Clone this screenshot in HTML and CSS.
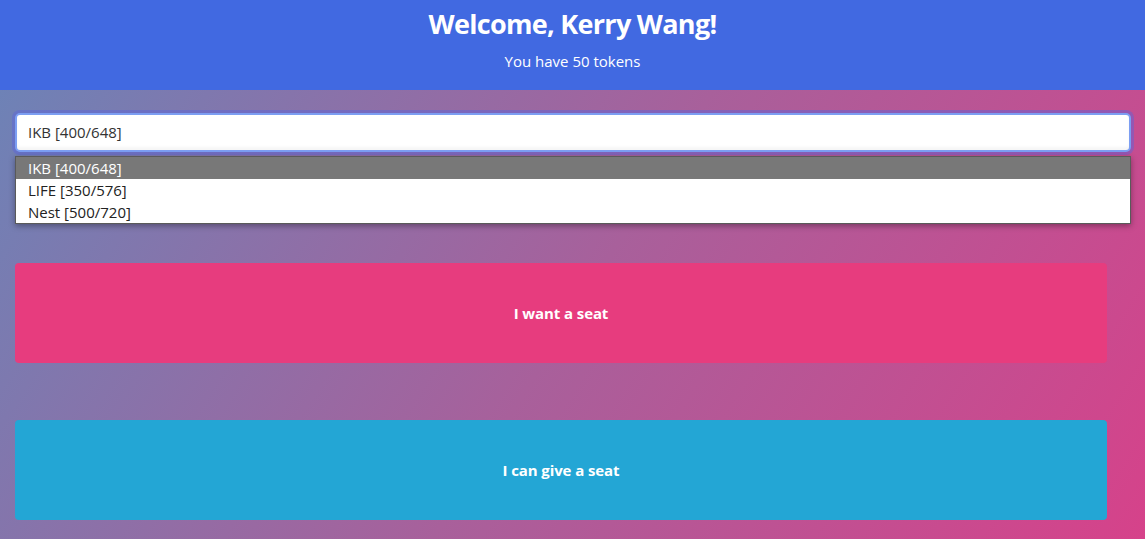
FILE: index.html
```html
<!DOCTYPE html>
<html lang="en">
<head>
<meta charset="utf-8">
<title>Seats</title>
<link rel="stylesheet" href="styles.css">
</head>
<body>
<header class="header">
  <h1 class="title">Welcome, Kerry Wang!</h1>
  <p class="subtitle">You have 50 tokens</p>
</header>
<main class="main">
  <div class="picker">
    <div class="select">IKB [400/648]</div>
    <ul class="options">
      <li class="option active">IKB [400/648]</li>
      <li class="option">LIFE [350/576]</li>
      <li class="option">Nest [500/720]</li>
    </ul>
  </div>
  <div class="actions">
    <button class="action want">I want a seat</button>
    <button class="action give">I can give a seat</button>
  </div>
</main>
</body>
</html>
```
FILE: styles.css
```css
* { box-sizing: border-box; }
html, body { margin: 0; padding: 0; height: 100%; }
body {
  font-family: "Open Sans", "Noto Sans", sans-serif;
  display: flex;
  flex-direction: column;
  background: #8a6aa8;
}
.header {
  background: #4169e1;
  height: 90px;
  color: #fff;
  text-align: center;
  padding-top: 6px;
}
.title {
  margin: 0;
  font-size: 27px;
  font-weight: 700;
  line-height: 36px;
  letter-spacing: -0.7px;
}
.subtitle {
  margin: 9px 0 0;
  font-size: 15px;
  line-height: 20px;
  letter-spacing: 0;
}
.main {
  flex: 1;
  background: linear-gradient(122deg, #6e82b6 0%, #a8609b 50%, #d6428a 100%);
  padding: 23px 14px 0 15px;
}
.picker { position: relative; }
.select {
  height: 39px;
  background: #fff;
  border: 2px solid #7c9ef2;
  border-radius: 5px;
  box-shadow: 0 0 0 3px rgba(90, 100, 220, 0.45), inset 0 -3px 3px rgba(0,0,0,0.04);
  padding-left: 11px;
  font-size: 15px;
  line-height: 35px;
  color: #333;
}
.options {
  position: absolute;
  left: 0;
  right: 0;
  top: 43px;
  margin: 0;
  padding: 0;
  list-style: none;
  background: #fff;
  border: 1px solid #5a5a5a;
  box-shadow: 0 2px 6px rgba(0, 0, 0, 0.35);
  z-index: 2;
}
.option {
  height: 22px;
  line-height: 22px;
  padding-left: 12px;
  font-size: 15px;
  color: #222;
}
.option.active { background: #787878; color: #fff; }
.actions {
  margin-top: 111px;
  margin-right: 24px;
  display: flex;
  flex-direction: column;
  gap: 57px;
}
.action {
  height: 100px;
  border: none;
  border-radius: 4px;
  color: #fff;
  font-family: inherit;
  font-size: 15px;
  font-weight: 700;
  letter-spacing: -0.1px;
  cursor: pointer;
}
.want { background: #e73c7e; }
.give { background: #23a6d5; }
```
